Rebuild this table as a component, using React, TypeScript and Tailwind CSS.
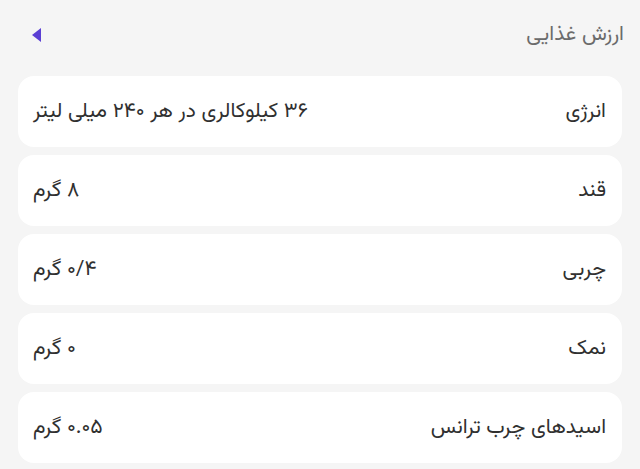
const rows = [
  { label: 'انرژی', value: '۳۶ کیلوکالری در هر ۲۴۰ میلی لیتر' },
  { label: 'قند', value: '۸ گرم' },
  { label: 'چربی', value: '۰/۴ گرم' },
  { label: 'نمک', value: '۰ گرم' },
  { label: 'اسیدهای چرب ترانس', value: '۰.۰۵ گرم' },
];

export default function App() {
  return (
    <main
      dir="rtl"
      className="min-h-[469px] bg-[#f5f5f5] text-[#303030]"
      style={{ fontFamily: '"Vazirmatn", "Noto Sans Arabic", "DejaVu Sans", sans-serif' }}
    >
      <header className="flex h-[70px] items-center justify-between pl-[32px] pr-[16px]">
        <h1 className="text-[21px] font-normal text-[#6b6b6b]">ارزش غذایی</h1>
        <button className="flex items-center" aria-label="back">
          <svg width="9" height="14" viewBox="0 0 9 14">
            <path d="M9 0 L0 7 L9 14 Z" fill="#5b3fd4" />
          </svg>
        </button>
      </header>

      <div className="mt-[6px] flex flex-col gap-[8px] px-[18px]">
        {rows.map((r) => (
          <div
            key={r.label}
            className="flex h-[71px] items-center justify-between rounded-[16px] bg-white pl-[15px] pr-[16px]"
          >
            <span className="text-[21px]">{r.label}</span>
            <span className="text-[21px]">{r.value}</span>
          </div>
        ))}
      </div>
    </main>
  );
}
